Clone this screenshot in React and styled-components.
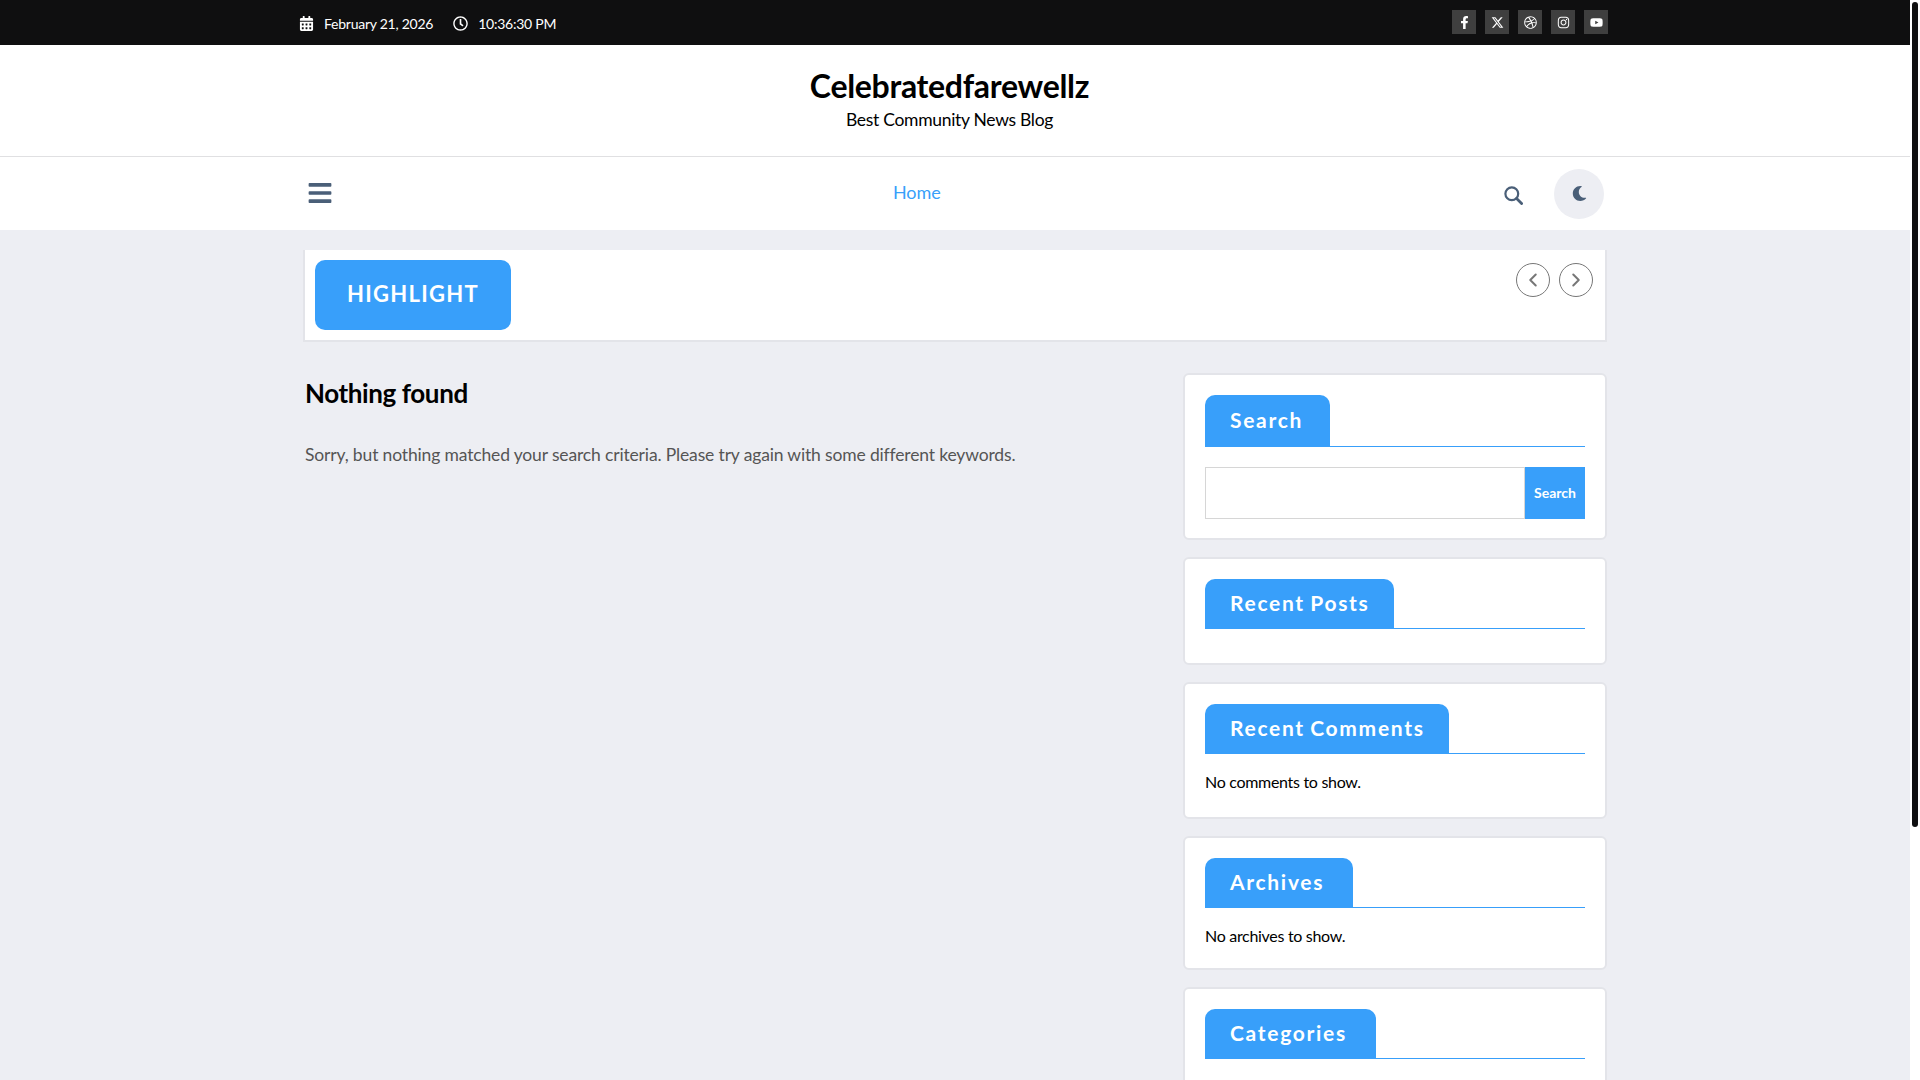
import styled, { createGlobalStyle } from "styled-components";
import {
  FaCalendarAlt,
  FaRegClock,
  FaFacebookF,
  FaDribbble,
  FaInstagram,
  FaYoutube,
  FaBars,
  FaMoon,
} from "react-icons/fa";
import { FaXTwitter } from "react-icons/fa6";
import { ChevronLeft, ChevronRight } from "lucide-react";

const BLUE = "#389ffa";
const FONT = `"Lato", "Open Sans", sans-serif`;

const GlobalStyle = createGlobalStyle`
  html, body {
    margin: 0;
    padding: 0;
    height: 100%;
    overflow: hidden;
  }
  * {
    box-sizing: border-box;
  }
  body {
    font-family: ${FONT};
    background: #edeef3;
  }
`;

const Shell = styled.div`
  display: flex;
  height: 100vh;
`;

const Page = styled.div`
  flex: 1;
  min-width: 0;
  overflow: hidden;
  background: #edeef3;
`;

const ScrollTrack = styled.div`
  width: 10px;
  background: #fff;
  padding: 2px 2px 0;
  flex-shrink: 0;
`;

const ScrollThumb = styled.div`
  height: 825px;
  background: #0f0f10;
  border-radius: 4px;
`;

const TopBar = styled.div`
  height: 45px;
  background: #0f0f10;
  display: flex;
  align-items: center;
  justify-content: space-between;
  padding: 0 302px 1px 299px;
`;

const DateGroup = styled.div`
  display: flex;
  align-items: center;
  color: #fff;
  font-size: 14px;
  letter-spacing: -0.25px;
  margin-top: 3px;
`;

const DateItem = styled.span`
  display: flex;
  align-items: center;
  gap: 10px;
  margin-right: 20px;
  svg {
    font-size: 15px;
  }
`;

const Socials = styled.div`
  display: flex;
  gap: 9px;
`;

const SocialLink = styled.a`
  width: 24px;
  height: 24px;
  background: #3f3f3f;
  color: #fff;
  display: flex;
  align-items: center;
  justify-content: center;
  font-size: 13px;
`;

const Branding = styled.header`
  height: 111px;
  background: #fff;
  display: flex;
  flex-direction: column;
  align-items: center;
  padding: 20px 11px 0 0;
`;

const SiteTitle = styled.h1`
  margin: 0;
  font-size: 32px;
  line-height: 42px;
  font-weight: 700;
  letter-spacing: -0.3px;
  color: #000;
`;

const Tagline = styled.p`
  margin: 1px 0 0;
  font-size: 17.5px;
  line-height: 24px;
  letter-spacing: -0.3px;
  color: #000;
`;

const Nav = styled.nav`
  height: 74px;
  background: #fff;
  border-top: 1px solid #e0e0e2;
  display: flex;
  align-items: center;
  padding: 0 306px 0 307px;
`;

const MenuButton = styled.span`
  display: flex;
  color: #4a5f78;
  font-size: 26px;
  margin-bottom: 1px;
`;

const NavLinks = styled.div`
  flex: 1;
  display: flex;
  padding-left: 560px;
`;

const NavLink = styled.a`
  color: ${BLUE};
  font-size: 18px;
  letter-spacing: -0.1px;
  margin-bottom: 3px;
`;

const SearchToggle = styled.span`
  display: flex;
  margin: 3px 31px 0 0;
  svg {
    display: block;
  }
`;

const ModeToggle = styled.span`
  width: 50px;
  height: 50px;
  border-radius: 50%;
  background: #edeef3;
  color: #4a5f78;
  display: flex;
  align-items: center;
  justify-content: center;
  font-size: 15px;
`;

const Content = styled.div`
  width: 1304px;
  margin: 20px auto 0;
`;

const HighlightBar = styled.section`
  height: 92px;
  background: #fff;
  border: 2px solid #e3e4e9;
  border-top: 0;
  display: flex;
  justify-content: space-between;
  padding: 10px 12px 0 10px;
`;

const HighlightLabel = styled.div`
  width: 196px;
  height: 70px;
  border-radius: 10px;
  background: ${BLUE};
  color: #fff;
  font-size: 22px;
  font-weight: 700;
  letter-spacing: 1.3px;
  display: flex;
  align-items: center;
  justify-content: center;
  padding-bottom: 3px;
`;

const Arrows = styled.div`
  display: flex;
  gap: 9px;
  padding-top: 3px;
`;

const ArrowButton = styled.span`
  width: 34px;
  height: 34px;
  border-radius: 50%;
  border: 1px solid #777;
  color: #777;
  display: flex;
  align-items: center;
  justify-content: center;
`;

const Columns = styled.div`
  display: flex;
  justify-content: space-between;
  padding-top: 31px;
`;

const Main = styled.main`
  flex: 1;
  padding: 3px 0 0 2px;
`;

const NotFoundTitle = styled.h2`
  margin: 0;
  font-size: 26px;
  line-height: 34px;
  font-weight: 700;
  letter-spacing: -0.4px;
  color: #000;
`;

const NotFoundText = styled.p`
  margin: 30px 0 0;
  font-size: 17.5px;
  line-height: 30px;
  letter-spacing: -0.15px;
  color: #555;
`;

const Sidebar = styled.aside`
  width: 424px;
  display: flex;
  flex-direction: column;
  gap: 17px;
`;

const Widget = styled.section`
  background: #fff;
  border: 2px solid #e3e4e9;
  border-radius: 6px;
  height: ${(props) => props.$height}px;
  padding: 20px 20px 0;
`;

const WidgetHead = styled.div`
  border-bottom: 1px solid ${BLUE};
  display: flex;
`;

const WidgetTitle = styled.h3`
  margin: 0 0 -1px;
  width: ${(props) => props.$width}px;
  height: ${(props) => (props.$tall ? 52 : 50)}px;
  background: ${BLUE};
  border-radius: 10px 10px 0 0;
  color: #fff;
  font-size: 21px;
  font-weight: 700;
  letter-spacing: 1.7px;
  word-spacing: -1.5px;
  padding: 0 0 4px 25px;
  display: flex;
  align-items: center;
`;

const WidgetText = styled.p`
  margin: 14px 0 0;
  font-size: 16px;
  line-height: 28px;
  letter-spacing: -0.3px;
  color: #000;
`;

const SearchForm = styled.form`
  display: flex;
  margin-top: 20px;
  height: 52px;
`;

const SearchInput = styled.input`
  flex: 1;
  min-width: 0;
  border: 1px solid #d6d6d6;
  background: #fff;
  outline: none;
`;

const SearchButton = styled.button`
  width: 60px;
  border: 0;
  background: ${BLUE};
  color: #fff;
  font-family: inherit;
  font-size: 14px;
  font-weight: 700;
  padding: 0 0 2px;
`;

const dateItems = [
  { icon: <FaCalendarAlt />, text: "February 21, 2026" },
  { icon: <FaRegClock />, text: "10:36:30 PM" },
];

const socials = [
  { icon: <FaFacebookF />, label: "Facebook" },
  { icon: <FaXTwitter />, label: "X" },
  { icon: <FaDribbble />, label: "Dribbble" },
  { icon: <FaInstagram />, label: "Instagram" },
  { icon: <FaYoutube />, label: "YouTube" },
];

function SearchIcon() {
  return (
    <svg width="19" height="19" viewBox="0 0 19 19" fill="none" stroke="#4a5f78">
      <circle cx="7.8" cy="7.8" r="6.4" strokeWidth="2.2" />
      <path d="M12.6 12.6 17.6 17.6" strokeWidth="2.8" strokeLinecap="round" />
    </svg>
  );
}

export default function App() {
  return (
    <>
      <GlobalStyle />
      <Shell>
        <Page>
          <TopBar>
            <DateGroup>
              {dateItems.map((item) => (
                <DateItem key={item.text}>
                  {item.icon}
                  {item.text}
                </DateItem>
              ))}
            </DateGroup>
            <Socials>
              {socials.map((item) => (
                <SocialLink key={item.label} aria-label={item.label}>
                  {item.icon}
                </SocialLink>
              ))}
            </Socials>
          </TopBar>
          <Branding>
            <SiteTitle>Celebratedfarewellz</SiteTitle>
            <Tagline>Best Community News Blog</Tagline>
          </Branding>
          <Nav>
            <MenuButton>
              <FaBars />
            </MenuButton>
            <NavLinks>
              <NavLink>Home</NavLink>
            </NavLinks>
            <SearchToggle>
              <SearchIcon />
            </SearchToggle>
            <ModeToggle>
              <FaMoon />
            </ModeToggle>
          </Nav>
          <Content>
            <HighlightBar>
              <HighlightLabel>HIGHLIGHT</HighlightLabel>
              <Arrows>
                <ArrowButton>
                  <ChevronLeft size={22} strokeWidth={2.2} />
                </ArrowButton>
                <ArrowButton>
                  <ChevronRight size={22} strokeWidth={2.2} />
                </ArrowButton>
              </Arrows>
            </HighlightBar>
            <Columns>
              <Main>
                <NotFoundTitle>Nothing found</NotFoundTitle>
                <NotFoundText>
                  Sorry, but nothing matched your search criteria. Please try
                  again with some different keywords.
                </NotFoundText>
              </Main>
              <Sidebar>
                <Widget $height={167}>
                  <WidgetHead>
                    <WidgetTitle $width={125} $tall>
                      Search
                    </WidgetTitle>
                  </WidgetHead>
                  <SearchForm>
                    <SearchInput type="text" />
                    <SearchButton type="button">Search</SearchButton>
                  </SearchForm>
                </Widget>
                <Widget $height={108}>
                  <WidgetHead>
                    <WidgetTitle $width={189}>Recent Posts</WidgetTitle>
                  </WidgetHead>
                </Widget>
                <Widget $height={137}>
                  <WidgetHead>
                    <WidgetTitle $width={244}>Recent Comments</WidgetTitle>
                  </WidgetHead>
                  <WidgetText>No comments to show.</WidgetText>
                </Widget>
                <Widget $height={134}>
                  <WidgetHead>
                    <WidgetTitle $width={148}>Archives</WidgetTitle>
                  </WidgetHead>
                  <WidgetText>No archives to show.</WidgetText>
                </Widget>
                <Widget $height={134}>
                  <WidgetHead>
                    <WidgetTitle $width={171}>Categories</WidgetTitle>
                  </WidgetHead>
                </Widget>
              </Sidebar>
            </Columns>
          </Content>
        </Page>
        <ScrollTrack>
          <ScrollThumb />
        </ScrollTrack>
      </Shell>
    </>
  );
}
